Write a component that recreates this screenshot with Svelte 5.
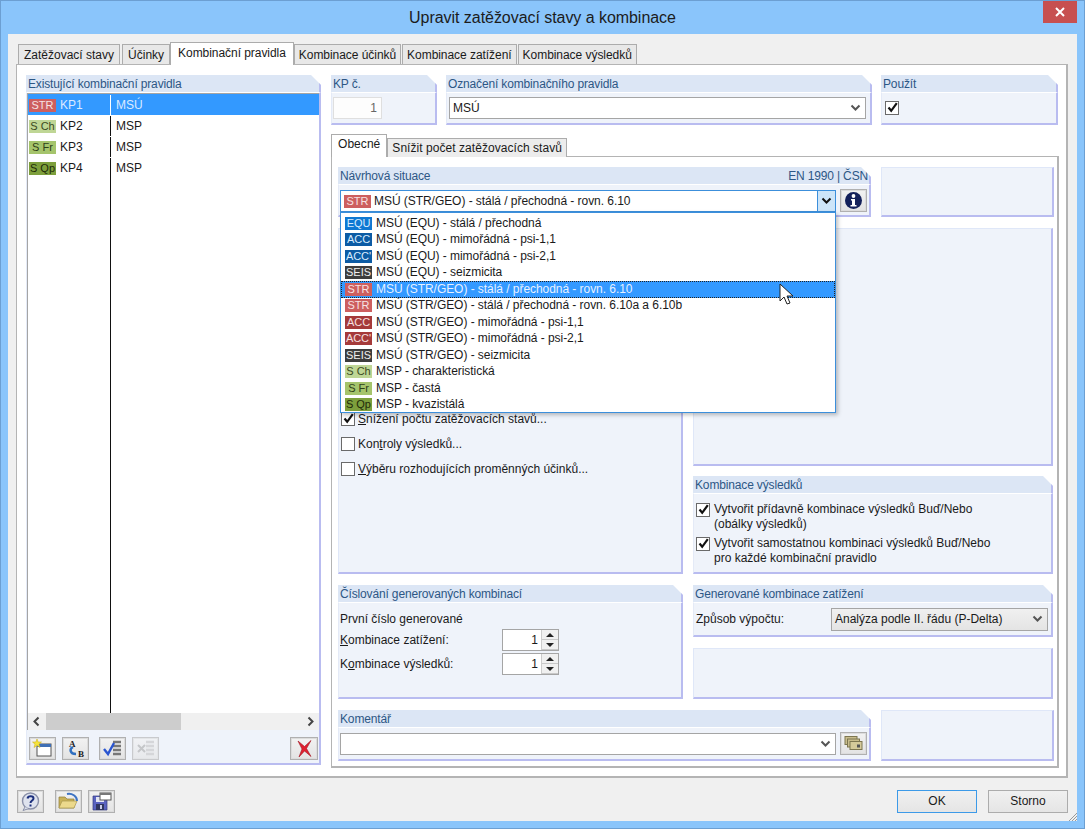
<script lang="ts">
  const tabs = ['Zatěžovací stavy', 'Účinky', 'Kombinační pravidla', 'Kombinace účinků', 'Kombinace zatížení', 'Kombinace výsledků'];
  const rules = [
    { badge: 'str', tag: 'STR', id: 'KP1', name: 'MSÚ', sel: true },
    { badge: 'sch', tag: 'S Ch', id: 'KP2', name: 'MSP', sel: false },
    { badge: 'sfr', tag: 'S Fr', id: 'KP3', name: 'MSP', sel: false },
    { badge: 'sqp', tag: 'S Qp', id: 'KP4', name: 'MSP', sel: false }
  ];
  const situations = [
    ['equ', 'EQU', 'MSÚ (EQU) - stálá / přechodná'],
    ['acc', 'ACC', 'MSÚ (EQU) - mimořádná - psi-1,1'],
    ['acc', "ACC'", 'MSÚ (EQU) - mimořádná - psi-2,1'],
    ['seis', 'SEIS', 'MSÚ (EQU) - seizmicita'],
    ['str', 'STR', 'MSÚ (STR/GEO) - stálá / přechodná - rovn. 6.10'],
    ['str', 'STR', 'MSÚ (STR/GEO) - stálá / přechodná - rovn. 6.10a a 6.10b'],
    ['accr', 'ACC', 'MSÚ (STR/GEO) - mimořádná - psi-1,1'],
    ['accr', "ACC'", 'MSÚ (STR/GEO) - mimořádná - psi-2,1'],
    ['seis', 'SEIS', 'MSÚ (STR/GEO) - seizmicita'],
    ['sch', 'S Ch', 'MSP - charakteristická'],
    ['sfr', 'S Fr', 'MSP - častá'],
    ['sqp', 'S Qp', 'MSP - kvazistálá']
  ];
</script>

{#snippet chevron(color = '#555')}
  <svg class="chev" width="11" height="8" viewBox="0 0 11 8"><path d="M1.5 1.5 L5.5 5.5 L9.5 1.5" fill="none" stroke={color} stroke-width="2"/></svg>
{/snippet}

{#snippet check()}
  <span class="cb"><svg width="13" height="13" viewBox="0 0 13 13"><path d="M2.5 6.5 L5.2 9.8 L10.8 2.2" fill="none" stroke="#111" stroke-width="2.2"/></svg></span>
{/snippet}

<div class="window">
  <header class="titlebar">
    <span class="title">Upravit zatěžovací stavy a kombinace</span>
    <span class="close"><svg width="10" height="10" viewBox="0 0 10 10"><path d="M1 1 L9 9 M9 1 L1 9" stroke="#fff" stroke-width="2"/></svg></span>
  </header>

  <div class="client">
    <div class="tabs">
      {#each tabs as t, i (t)}
        <span class="tab" class:active={i === 2}>{t}</span>
      {/each}
    </div>

    <div class="tabpanel">
      <!-- left: rule list -->
      <section class="group rulelist">
        <div class="gh">Existující kombinační pravidla</div>
        <div class="gb listbody">
          <div class="list">
            {#each rules as r (r.id)}
              <div class="rule" class:sel={r.sel}>
                <span class="c1"><span class="badge {r.badge}">{r.tag}</span>{r.id}</span>
                <span class="c2">{r.name}</span>
              </div>
            {/each}
            <div class="rest"></div>
          </div>
          <div class="hscroll">
            <svg width="18" height="17" viewBox="0 0 18 17"><path d="M10.5 4.5 L6.5 8.5 L10.5 12.5" fill="none" stroke="#444" stroke-width="2"/></svg>
            <div class="track"><div class="thumb"></div></div>
            <svg width="18" height="17" viewBox="0 0 18 17"><path d="M7.5 4.5 L11.5 8.5 L7.5 12.5" fill="none" stroke="#444" stroke-width="2"/></svg>
          </div>
          <div class="listtools">
            <span class="btn">
              <svg width="21" height="19" viewBox="0 0 21 19">
                <rect x="5" y="5" width="14" height="12" fill="#fff" stroke="#555"/><rect x="5" y="5" width="14" height="3" fill="#3f6fb5"/>
                <path d="M5 0 L6.2 3 L9.5 3 L7 5.2 L8 8.5 L5 6.6 L2 8.5 L3 5.2 L0.5 3 L3.8 3 Z" fill="#f5e33c" stroke="#c9a90f" stroke-width=".5"/>
              </svg>
            </span>
            <span class="btn">
              <svg width="21" height="19" viewBox="0 0 21 19">
                <path d="M8 8 C4 10 5 15 11 15" fill="none" stroke="#2f6fc0" stroke-width="2.4"/>
                <text x="4" y="8" class="ab">A</text><text x="13" y="18" class="ab">B</text>
              </svg>
            </span>
            <span class="btn gap">
              <svg width="21" height="19" viewBox="0 0 21 19">
                <path d="M11 3 H19 M11 7 H19 M11 11 H19 M11 15 H19" stroke="#777" stroke-width="2.4"/>
                <path d="M2 10 L6 15 L12 4" fill="none" stroke="#2a55d0" stroke-width="2.4"/>
              </svg>
            </span>
            <span class="btn off">
              <svg width="21" height="19" viewBox="0 0 21 19">
                <path d="M11 3 H19 M11 7 H19 M11 11 H19 M11 15 H19" stroke="#c4c4c4" stroke-width="2.4"/>
                <path d="M3 6 L10 13 M10 6 L3 13" stroke="#aaa" stroke-width="2"/>
              </svg>
            </span>
            <span class="btn push">
              <svg width="19" height="19" viewBox="0 0 19 19"><path d="M3 2 L9.5 7.5 L16 1.5 L11.5 9.5 L16 17.5 L9.5 12 L4 18 L7 10 Z" fill="#e02030" stroke="#a01420" stroke-width=".6"/></svg>
            </span>
          </div>
        </div>
      </section>

      <!-- right: rule detail -->
      <div class="detail">
        <div class="toprow">
          <section class="group g-no">
            <div class="gh">KP č.</div>
            <div class="gb"><span class="numbox">1</span></div>
          </section>
          <section class="group g-name">
            <div class="gh">Označení kombinačního pravidla</div>
            <div class="gb"><div class="combo namecombo"><span>MSÚ</span>{@render chevron()}</div></div>
          </section>
          <section class="group g-use">
            <div class="gh">Použít</div>
            <div class="gb">{@render check()}</div>
          </section>
        </div>

        <div class="subtabs">
          <span class="subtab active">Obecné</span>
          <span class="subtab">Snížit počet zatěžovacích stavů</span>
        </div>

        <div class="subpanel">
          <div class="row">
            <section class="group wide situ">
              <div class="gh between"><span>Návrhová situace</span><span>EN 1990 | ČSN</span></div>
              <div class="gb situbody">
                <div class="combo opencombo">
                  <span class="badge str">STR</span><span class="val">MSÚ (STR/GEO) - stálá / přechodná - rovn. 6.10</span>
                  <span class="dropbtn">{@render chevron('#111')}</span>
                  <div class="droplist">
                    {#each situations as s, i (i)}
                      <div class="ditem" class:hot={i === 4}>
                        <span class="badge {s[0]}">{s[1]}</span>{s[2]}
                        {#if i === 4}
                          <svg class="cursor" width="16" height="23" viewBox="0 0 16 23"><path d="M1 1 V18 L5 14 L8 21 L11 20 L8 13 L14 13 Z" fill="#fff" stroke="#222"/></svg>
                        {/if}
                      </div>
                    {/each}
                  </div>
                </div>
                <span class="btn info">
                  <svg width="19" height="19" viewBox="0 0 19 19">
                    <circle cx="9.5" cy="9.5" r="8.5" fill="#14215a"/>
                    <circle cx="9.5" cy="5" r="1.9" fill="#fff"/>
                    <path d="M7 8 H11 V14 H12.5 V15.5 H6.5 V14 H8 V9.5 H7 Z" fill="#fff"/>
                  </svg>
                </span>
              </div>
            </section>
            <section class="plain side"></section>
          </div>

          <div class="cols">
            <div class="stack">
              <section class="plain general">
                <label class="opt">{@render check()}<span><u>S</u>nížení počtu zatěžovacích stavů...</span></label>
                <label class="opt"><span class="cb"></span><span>Kon<u>t</u>roly výsledků...</span></label>
                <label class="opt"><span class="cb"></span><span><u>V</u>ýběru rozhodujících proměnných účinků...</span></label>
              </section>
              <section class="group numbering">
                <div class="gh">Číslování generovaných kombinací</div>
                <div class="gb numbody">
                  <div class="numhead">První číslo generované</div>
                  <div class="numrow"><span><u>K</u>ombinace zatížení:</span>
                    <span class="spin"><span class="spinval">1</span><span class="arrows"><i class="up"></i><i class="down"></i></span></span></div>
                  <div class="numrow"><span>K<u>o</u>mbinace výsledků:</span>
                    <span class="spin"><span class="spinval">1</span><span class="arrows"><i class="up"></i><i class="down"></i></span></span></div>
                </div>
              </section>
            </div>

            <div class="stack">
              <section class="plain rtop"></section>
              <section class="group results">
                <div class="gh">Kombinace výsledků</div>
                <div class="gb resbody">
                  <div class="opt2">{@render check()}<span>Vytvořit přídavně kombinace výsledků Buď/Nebo<br>(obálky výsledků)</span></div>
                  <div class="opt2">{@render check()}<span>Vytvořit samostatnou kombinaci výsledků Buď/Nebo<br>pro každé kombinační pravidlo</span></div>
                </div>
              </section>
              <section class="group generated">
                <div class="gh">Generované kombinace zatížení</div>
                <div class="gb genbody">
                  <span>Způsob výpočtu:</span>
                  <div class="combo grey"><span>Analýza podle II. řádu (P-Delta)</span>{@render chevron()}</div>
                </div>
              </section>
              <section class="plain rbottom"></section>
            </div>
          </div>

          <div class="row">
            <section class="group wide comment">
              <div class="gh">Komentář</div>
              <div class="gb situbody">
                <div class="combo commentcombo"><span></span>{@render chevron()}</div>
                <span class="btn info">
                  <svg width="19" height="17" viewBox="0 0 19 17">
                    <rect x="1" y="1.5" width="12" height="8" fill="#c9bd8c" stroke="#7d7650"/>
                    <rect x="3.5" y="4" width="12" height="8" fill="#c9bd8c" stroke="#7d7650"/>
                    <rect x="6" y="6.5" width="12" height="8" fill="#d5ca9a" stroke="#7d7650"/>
                    <rect x="13" y="9.5" width="3" height="3" fill="#555"/>
                  </svg>
                </span>
              </div>
            </section>
            <section class="plain side"></section>
          </div>
        </div>
      </div>
    </div>

    <footer class="footer">
      <span class="btn">
        <svg width="21" height="19" viewBox="0 0 21 19">
          <circle cx="10.5" cy="9" r="8" fill="#dfe3ee" stroke="#8a90a8" stroke-width="1.4"/>
          <path d="M5 15 L3 18.5 L9 16.5" fill="#dfe3ee" stroke="#8a90a8"/>
          <path d="M7.5 6.5 C8 3.5 13.5 3.5 13.5 6.5 C13.5 8.5 10.5 8.5 10.5 11" fill="none" stroke="#1c2f7c" stroke-width="2"/>
          <rect x="9.5" y="12.5" width="2" height="2" fill="#1c2f7c"/>
        </svg>
      </span>
      <span class="btn fgap">
        <svg width="21" height="19" viewBox="0 0 21 19">
          <path d="M1 5 H7 L9 7 H16 V16 H1 Z" fill="#c9b25a" stroke="#8f7d36" stroke-width=".7"/>
          <path d="M1 16 L4 9 H19 L16 16 Z" fill="#ecd98c" stroke="#a8954a" stroke-width=".7"/>
          <path d="M9 2 C14 1 19 4 19 9" fill="none" stroke="#3f74c4" stroke-width="2"/>
        </svg>
      </span>
      <span class="btn">
        <svg width="21" height="19" viewBox="0 0 21 19">
          <path d="M2 4 H16 V18 H2 Z" fill="#5a63c0" stroke="#333a80" stroke-width=".7"/>
          <rect x="5" y="12" width="8" height="6" fill="#30365f"/><rect x="9" y="13" width="2" height="4" fill="#c8cce8"/>
          <rect x="5" y="5" width="8" height="5" fill="#e4e6f4"/>
          <rect x="9" y="1" width="11" height="7" fill="#fff" stroke="#555"/><rect x="9" y="1" width="11" height="2" fill="#777"/>
        </svg>
      </span>
      <span class="wbtn ok">OK</span>
      <span class="wbtn">Storno</span>
    </footer>
    <svg class="grip" width="12" height="12" viewBox="0 0 12 12"><path d="M11 3 L3 11 M11 6 L6 11 M11 9 L9 11" stroke="#999" stroke-width="1"/></svg>
  </div>
</div>

<style>
  :global(body) { margin: 0; }
  .window {
    width: 1085px; height: 829px; box-sizing: border-box; overflow: hidden;
    background: #8ac5fb; border: 1px solid #6c9fd2;
    display: flex; flex-direction: column;
    font: 12px/15px "Liberation Sans", Arial, sans-serif; color: #1a1a1a;
  }
  .titlebar { height: 33px; flex: none; display: flex; align-items: center; justify-content: center; position: relative; }
  .title { font-size: 16px; color: #1c1c1c; margin-top: -1px; letter-spacing: -.05px; }
  .close {
    position: absolute; top: 0; right: 7px; width: 34px; height: 22px; background: #c75050;
    display: flex; align-items: center; justify-content: center;
  }
  .client {
    flex: 1; margin: 0 7px 7px; background: #f0f0f0; padding: 8px 9px 0 8px;
    display: flex; flex-direction: column; position: relative; min-height: 0;
  }

  .tabs { display: flex; height: 22px; align-items: flex-end; padding-left: 2px; position: relative; z-index: 1; }
  .tab {
    height: 20px; box-sizing: border-box; padding: 3px 5px 0; background: #e8e8e8;
    border: 1px solid #acacac; border-bottom: none; margin-right: 2px; white-space: nowrap;
  }
  .tab.active { height: 23px; background: #fff; padding: 3px 7px 0; margin: 0 0 -1px -2px; position: relative; letter-spacing: -.05px; }
  .tab.active ~ .tab { padding: 3px 4px 0; margin-right: 1px; letter-spacing: -.05px; }

  .tabpanel {
    height: 714px; box-sizing: border-box; background: #fff; border: 2px solid #b4b4b4;
    border-width: 1px 2px 2px 1px; padding: 10px 9px 8px 9px; display: flex; gap: 10px;
  }

  .group { display: flex; flex-direction: column; min-width: 0; flex: none; }
  .gh {
    height: 17px; flex: none; box-sizing: border-box; padding: 2px 2px 0; color: #2d5785; letter-spacing: -.15px;
    background: linear-gradient(#b9bcf0, #b9bcf0) right / 2px 100% no-repeat, #dce6f5;
    clip-path: polygon(0 0, calc(100% - 10px) 0, 100% 10px, 100% 100%, 0 100%);
  }
  .between { display: flex; justify-content: space-between; padding-right: 3px; }
  .gb {
    flex: 1; background: #eff3fa; border-right: 2px solid #b9bcf0; border-bottom: 2px solid #b9bcf0;
    border-left: 1px solid #e4eaf7; border-top: 1px solid #fff; box-sizing: border-box; min-height: 0;
  }
  .plain {
    box-sizing: border-box; background: #eff3fa;
    border: 1px solid #dfe7f8; border-right: 2px solid #b9bcf0; border-bottom: 2px solid #b9bcf0;
  }

  .rulelist { width: 295px; margin-bottom: 3px; }
  .listbody { display: flex; flex-direction: column; }
  .list { flex: 1; background: #fff; display: flex; flex-direction: column; border-left: 1px solid #a5a5a5; border-top: 1px solid #a5a5a5; }
  .rule { display: flex; height: 21px; align-items: center; padding-top: 1px; box-sizing: border-box; }
  .rule.sel { background: #3399ff; color: #dbeaff; }
  .c1 { width: 83px; flex: none; display: flex; align-items: center; gap: 4px; padding-left: 1px; box-sizing: border-box; border-right: 1px solid #111; height: 100%; }
  .rule.sel .c1 { border-right-color: #fff; }
  .c2 { padding-left: 5px; }
  .rest { flex: 1; width: 82px; border-right: 1px solid #111; }

  .badge {
    display: inline-block; width: 27px; height: 13px; line-height: 13px; text-align: center; flex: none;
    font-size: 11px; overflow: hidden; white-space: nowrap;
  }
  .str { background: #cd5f5f; color: #f6e3e3; }
  .sch { background: #bfd695; color: #3b4a22; }
  .sfr { background: #a5c46c; color: #2f3f18; }
  .sqp { background: #7d9f3c; color: #1f2c0a; }
  .equ { background: #0f78d2; color: #d8ecff; }
  .acc { background: #0c5ba4; color: #d8ecff; }
  .accr { background: #a53a3a; color: #f6e0e0; }
  .seis { background: #3d3d3d; color: #eee; }

  .hscroll { height: 17px; flex: none; display: flex; background: #f0f0f0; border-left: 1px solid #a5a5a5; }
  .track { flex: 1; }
  .thumb { width: 135px; height: 100%; background: #cdcdcd; }
  .listtools { height: 33px; flex: none; box-sizing: border-box; display: flex; align-items: center; gap: 6px; padding: 3px 1px 0 2px; }

  .btn {
    width: 27px; height: 23px; flex: none; box-sizing: border-box; display: inline-flex; align-items: center; justify-content: center;
    border: 1px solid #b0b0b0; outline: 1px solid #dcdcdc; outline-offset: -2px;
    background: linear-gradient(#f2f2f2, #e3e3e3);
  }
  .btn.gap { margin-left: 4px; }
  .btn.off { opacity: .6; }
  .btn.push { margin-left: auto; width: 28px; }
  .ab { font: bold 9px "Liberation Serif", serif; fill: #222; }

  .detail { flex: 1; min-width: 0; display: flex; flex-direction: column; }
  .toprow { display: flex; gap: 9px; height: 50px; flex: none; }
  .g-no { width: 106px; }
  .g-name { width: 426px; }
  .g-use { width: 177px; }
  .g-no .gb { padding: 4px 1px 2px; }
  .numbox {
    display: block; width: 49px; height: 22px; box-sizing: border-box; text-align: right; line-height: 20px; padding-right: 4px;
    background: #fdfdfd; border: 1px solid #dfdfdf; color: #666;
  }
  .g-name .gb { padding: 4px 4px 2px 2px; }
  .g-use .gb { padding: 8px 3px 3px; }

  .combo {
    height: 22px; box-sizing: border-box; display: flex; align-items: center; justify-content: space-between;
    background: #fff; border: 1px solid #a5a5a5; padding: 0 4px 0 3px; position: relative;
  }
  .cb {
    width: 14px; height: 14px; flex: none; box-sizing: border-box; display: inline-block;
    background: #fff; border: 1px solid #6a6a6a; position: relative;
  }
  .cb svg { display: block; margin: -1px 0 0 0; }

  .subtabs { display: flex; align-items: flex-end; height: 23px; margin-top: 9px; position: relative; z-index: 1; margin-bottom: -1px; }
  .subtab {
    height: 19px; box-sizing: border-box; padding: 2px 4px 0; border: 1px solid #acacac; border-bottom: none;
    background: #ececec; letter-spacing: .05px;
  }
  .subtab.active { height: 23px; background: #fff; padding: 2px 6px 0; }

  .subpanel {
    flex: 1; min-height: 0; box-sizing: border-box; background: #fff; border: 1px solid #b4b4b4; border-width: 1px 2px 2px 1px;
    padding: 10px 3px 5px 6px; display: flex; flex-direction: column; gap: 11px; margin-right: -2px;
  }
  .row { display: flex; gap: 10px; flex: none; height: 50px; }
  .row:last-child { height: 51px; }
  .wide { width: 533px; }
  .side { flex: 1; }
  .situbody { display: flex; gap: 4px; padding: 5px 2px 0 1px; align-items: flex-start; }
  .opencombo { width: 496px; flex: none; justify-content: flex-start; border-color: #3c8fdb; padding: 0 0 0 3px; z-index: 5; }
  .val { margin-left: 3px; letter-spacing: -.05px; }
  .dropbtn {
    position: absolute; right: 0; top: 0; bottom: 0; width: 17px; background: #cde5f9; border-left: 1px solid #3c8fdb;
    display: flex; align-items: center; justify-content: center;
  }
  .droplist {
    position: absolute; left: -1px; top: 21px; width: 496px; height: 201px; box-sizing: border-box;
    background: #fff; border: 1px solid #3c8fdb;
    box-shadow: 2px 2px 4px rgba(0,0,0,.25); display: flex; flex-direction: column; padding-top: 2px;
  }
  .ditem { height: 16.5px; display: flex; align-items: center; gap: 4px; padding-left: 4px; flex: none; white-space: nowrap; position: relative; box-sizing: border-box; letter-spacing: -.05px; }
  .ditem.hot { background: #3399ff; color: #e6f1ff; outline: 1px dotted #222; outline-offset: -1px; }
  .cursor { position: absolute; left: 438px; top: 2px; }
  .info { margin-top: -1px; }
  .commentcombo { width: 496px; flex: none; }

  .cols { display: grid; grid-template-columns: 345px 360px; gap: 10px; flex: 1; min-height: 0; }
  .stack { display: flex; flex-direction: column; gap: 10px; min-height: 0; }
  .general { height: 346px; padding: 181px 0 0 2px; flex: none; }
  .opt { display: flex; align-items: center; gap: 3px; height: 18px; margin-bottom: 7px; }
  .numbering { flex: 1; margin-top: 1px; }
  .numbody { padding: 8px 1px 0 1px; }
  .numhead { height: 17px; padding-top: 1px; box-sizing: border-box; }
  .numrow { display: flex; align-items: center; height: 24px; justify-content: space-between; width: 219px; }
  .spin {
    width: 57px; height: 22px; box-sizing: border-box; background: #fff; border: 1px solid #a5a5a5;
    display: flex; align-items: stretch;
  }
  .spinval { flex: 1; text-align: right; padding-right: 3px; line-height: 20px; }
  .arrows { width: 16px; display: flex; flex-direction: column; border-left: 1px solid #ccc; }
  .arrows i { flex: 1; background: #f0f0f0; display: flex; align-items: center; justify-content: center; border-bottom: 1px solid #c8c8c8; }
  .arrows i::after { content: ''; border: 4px solid transparent; }
  .up::after { border-bottom-color: #222 !important; border-top-width: 0 !important; }
  .down::after { border-top-color: #222 !important; border-bottom-width: 0 !important; }

  .rtop { height: 238px; flex: none; }
  .results { height: 98px; }
  .resbody { padding: 8px 2px 0 2px; }
  .opt2 { display: flex; gap: 4px; margin-bottom: 4px; line-height: 15px; }
  .opt2 .cb { margin-top: 1px; }
  .generated { height: 52px; margin-top: 1px; }
  .genbody { display: flex; align-items: center; justify-content: space-between; padding: 1px 3px 1px 2px; }
  .grey { width: 217px; background: linear-gradient(#f0f0f0, #e4e4e4); height: 23px; }
  .rbottom { flex: 1; margin-top: 1px; }

  .footer { display: flex; align-items: center; flex: 1; padding: 3px 0 0 1px; }
  .footer .btn:first-child { margin-right: 11px; }
  .fgap { margin-right: 6px; }
  .wbtn {
    width: 80px; height: 23px; box-sizing: border-box; text-align: center; line-height: 21px;
    border: 1px solid #acacac; background: linear-gradient(#f0f0f0, #e5e5e5); margin-left: 11px;
  }
  .ok { margin-left: auto; border-color: #3c9ae8; }
  .grip { position: absolute; right: -1px; bottom: -1px; }
</style>
